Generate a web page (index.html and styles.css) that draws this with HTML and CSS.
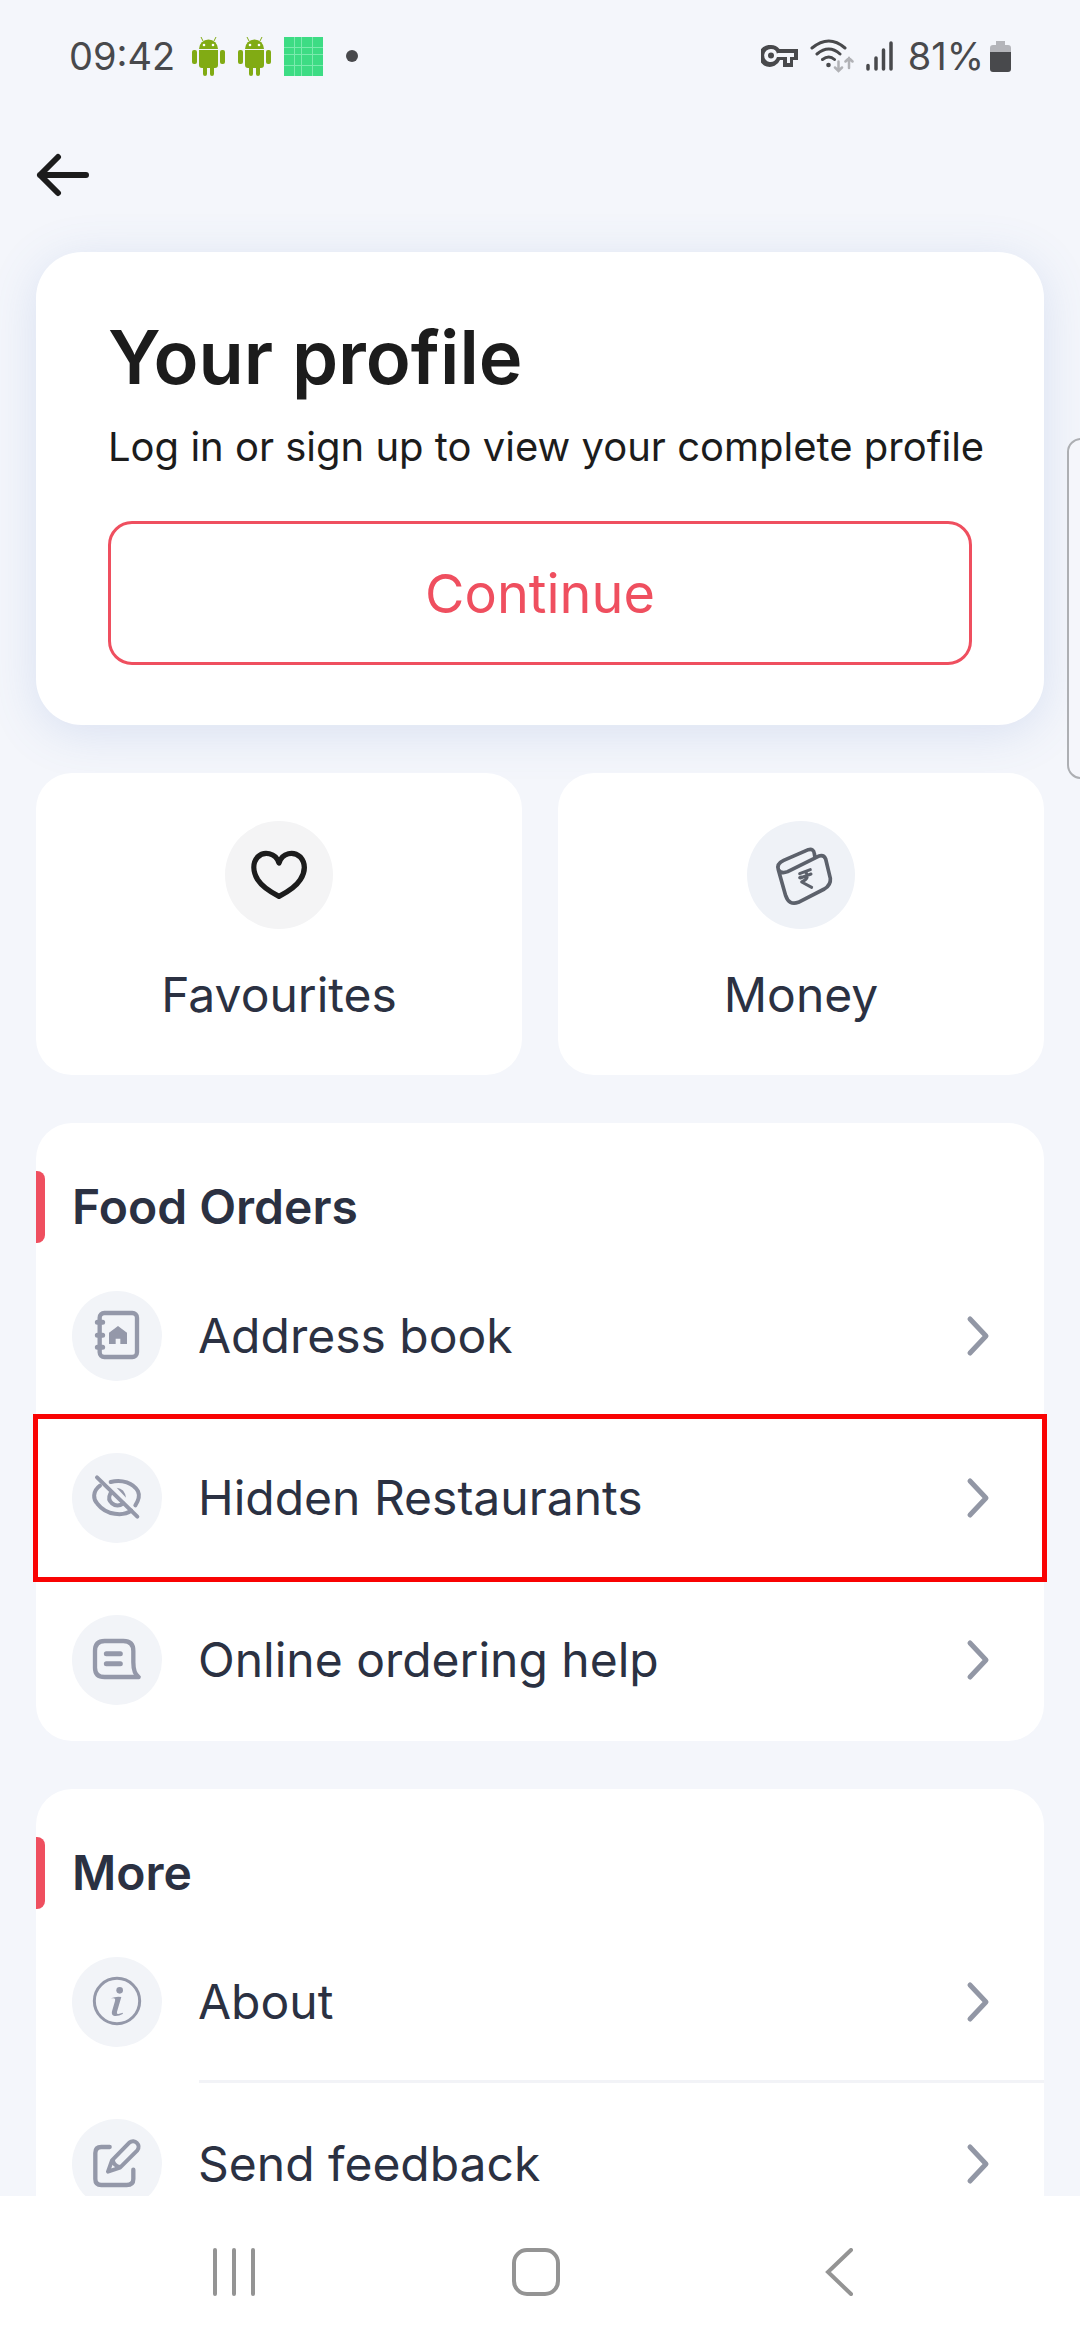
FILE: index.html
```html
<!DOCTYPE html>
<html lang="en">
<head>
<meta charset="utf-8">
<meta name="viewport" content="width=device-width, initial-scale=1">
<title>Your profile</title>
<link rel="stylesheet" href="styles.css">
</head>
<body>
<svg class="defs" aria-hidden="true">
  <symbol id="chevron" viewBox="0 0 24 42"><path d="M4 4l16 17-16 17" fill="none" stroke="currentColor" stroke-width="5" stroke-linecap="round" stroke-linejoin="round"/></symbol>
  <symbol id="android" viewBox="0 0 33 39">
    <g fill="#81ab14">
      <path d="M7 12a9.500 9.500 0 0 1 19 0z"/>
      <path d="M7 13h19v15a3 3 0 0 1-3 3h-1v6a2 2 0 0 1-4 0v-6h-3v6a2 2 0 0 1-4 0v-6h-1a3 3 0 0 1-3-3z"/>
      <rect x="0" y="13" width="5" height="14" rx="2"/><rect x="28" y="13" width="5" height="14" rx="2"/>
    </g>
    <path d="M11 4L9 0M22 4l2-4" stroke="#81ab14" stroke-width="1"/>
    <circle cx="12" cy="8" r="1.300" fill="#fff"/><circle cx="21" cy="8" r="1.300" fill="#fff"/>
  </symbol>
</svg>
<main class="screen">
  <div class="status">
    <div class="status-left">
      <span class="clock">09:42</span>
      <svg width="33" height="39"><use href="#android"/></svg>
      <svg width="33" height="39"><use href="#android"/></svg>
      <svg width="39" height="39" viewBox="0 0 39 39"><path fill="#3ddc84" d="M0 0h39v39H0z"/><path d="M10.500 0v39M17.500 0v39M28.500 0v39M0 10.500h39M0 17.500h39M0 28.500h39" stroke="#7bebae" stroke-width="1"/></svg>
      <span class="dot"></span>
    </div>
    <div class="status-right">
      <svg width="37" height="22" viewBox="0 0 37 22"><path fill="#48494c" fill-rule="evenodd" d="M10 0a11 11 0 1 0 9 15h3v7h10v-7h5V4H18.500A11 11 0 0 0 10 0zM10 4a6 6 0 0 1 6 5l.500-1H33v4h-4v6h-3v-6H16a6.500 6.500 0 1 1-6-8z"/><circle cx="10" cy="10.500" r="3" fill="#48494c"/></svg>
      <svg width="44" height="34" viewBox="0 0 44 34" fill="none" stroke-linecap="round"><path d="M2 9Q19-5 35 9M7 15Q19 5 30 15M12.500 20.500Q19 15.500 24.500 20.500" stroke="#48494c" stroke-width="3"/><circle cx="18.500" cy="26" r="2.300" fill="#48494c"/><path d="M28.500 22.500v9M25 28.500l3.500 3.500 3.500-3.500M39 29V19M35.500 22.500L39 19l3.500 3.500" stroke="#b1b2b6" stroke-width="2.500"/></svg>
      <svg width="28" height="30" viewBox="0 0 28 30"><path d="M2 24.500v3.500M10 17v11M17.500 9v19M25 2v26" stroke="#48494c" stroke-width="3.500" stroke-linecap="round"/></svg>
      <span class="charge">81%</span>
      <svg width="21" height="31" viewBox="0 0 21 31"><path fill="#b4b5ba" d="M6 0h9v4h3q3 0 3 3v5H0V7q0-3 3-3h3z"/><path fill="#48494c" d="M0 11h21v17q0 3-3 3H3q-3 0-3-3z"/></svg>
    </div>
  </div>

  <header class="topbar">
    <button class="back" type="button" aria-label="Back">
      <svg width="54" height="44" viewBox="0 0 54 44"><path d="M22 4L4 22l18 18M4 22h46" fill="none" stroke="#1c1c1c" stroke-width="6" stroke-linecap="round" stroke-linejoin="round"/></svg>
    </button>
  </header>

  <section class="card profile">
    <h1>Your profile</h1>
    <p>Log in or sign up to view your complete profile</p>
    <button class="continue" type="button">Continue</button>
  </section>

  <nav class="tiles" aria-label="Shortcuts">
    <a class="card tile" href="#favourites">
      <svg width="108" height="108" viewBox="0 0 324 324"><circle cx="162" cy="162" r="162" fill="#f4f4f5"/><path d="M162 126C152 94 116 90 98 108C82 126 84 152 98 176C112 198 138 214 162 226C186 214 212 198 226 176C242 152 242 126 226 108C206 90 172 94 162 126z" fill="none" stroke="#1c1c1c" stroke-width="16" stroke-linejoin="round"/></svg>
      <span>Favourites</span>
    </a>
    <a class="card tile" href="#money">
      <svg width="108" height="108" viewBox="0 0 324 324"><circle cx="162" cy="162" r="162" fill="#eff2f7"/><g fill="none" stroke="#5c616b" stroke-width="11" stroke-linecap="round" stroke-linejoin="round"><path d="M94 146L116 224Q126 254 154 244L232 204Q252 192 250 172L236 114Q230 100 214 106L122 152Q102 160 94 146Q88 128 110 118L184 86Q200 82 202 98L204 110"/><path stroke-width="9" d="M158 158L190 146M160 171L192 159M176 153Q190 172 164 183L194 199M158 170L163 168"/></g></svg>
      <span>Money</span>
    </a>
  </nav>

  <section class="card group">
    <h2>Food Orders</h2>
    <ul>
      <li><a class="row" href="#address">
        <svg class="badge" viewBox="0 0 270 270"><circle class="disc" cx="135" cy="135" r="135"/><rect x="83" y="66" width="112" height="132" rx="14" stroke-width="13"/><path d="M76 94h16M76 133h16M76 169h16" stroke-width="15"/><path class="solid" d="M138 105l27 20v34h-20v-16h-14v16h-20v-34z"/></svg>
        <span>Address book</span><svg class="chevron"><use href="#chevron"/></svg></a></li>
      <li><a class="row marked" href="#hidden">
        <svg class="badge" viewBox="0 0 270 270"><circle class="disc" cx="135" cy="135" r="135"/><g stroke-width="12"><path d="M84 98C60 116 64 140 76 152C104 188 154 190 178 173M116 87C150 78 184 90 198 115Q206 132 190 157"/><path d="M115 122Q106 140 120 151Q136 164 154 151"/><path class="solid" d="M134 104q24 2 28 30z"/><path d="M75 73L196 191"/></g></svg>
        <span>Hidden Restaurants</span><svg class="chevron"><use href="#chevron"/></svg></a></li>
      <li><a class="row" href="#help">
        <svg class="badge" viewBox="0 0 270 270"><circle class="disc" cx="135" cy="135" r="135"/><path d="M98 78H154Q184 78 184 108V142Q184 176 200 186H98Q69 186 69 158V108Q69 78 98 78z" stroke-width="13"/><path d="M103 116h42M103 146h42" stroke-width="15"/></svg>
        <span>Online ordering help</span><svg class="chevron"><use href="#chevron"/></svg></a></li>
    </ul>
  </section>

  <section class="card group">
    <h2>More</h2>
    <ul>
      <li><a class="row ruled" href="#about">
        <svg class="badge" viewBox="0 0 270 270"><circle class="disc" cx="135" cy="135" r="135"/><circle cx="135" cy="132" r="68" stroke-width="9"/><circle class="solid" cx="143" cy="100" r="10"/><path class="solid" d="M117 124q16-7 31-4l-13 44q-2 8 4 7l14-4-1 4q-12 7-24 6-11-2-8-14l9-31q2-8-4-8h-9z"/></svg>
        <span>About</span><svg class="chevron"><use href="#chevron"/></svg></a></li>
      <li><a class="row" href="#feedback">
        <svg class="badge" viewBox="0 0 270 270"><circle class="disc" cx="135" cy="135" r="135"/><path d="M113 84H88Q70 84 70 102V180Q70 198 88 198H164Q184 198 184 180V152" stroke-width="13"/><path d="M108 158L120 124L172 71C188 58 208 78 196 94L144 146zM122 122Q126 142 144 144" stroke-width="12"/></svg>
        <span>Send feedback</span><svg class="chevron"><use href="#chevron"/></svg></a></li>
    </ul>
  </section>
  <div class="edge-handle"></div>
</main>

<footer class="system-nav">
  <button type="button" aria-label="Recent apps"><svg width="48" height="48" viewBox="0 0 48 48"><path d="M5 2v44M24 2v44M43 2v44"/></svg></button>
  <button type="button" aria-label="Home"><svg width="48" height="48" viewBox="0 0 48 48"><rect x="2" y="2" width="44" height="44" rx="13"/></svg></button>
  <button type="button" aria-label="Back"><svg width="48" height="48" viewBox="0 0 48 48"><path d="M36 2L13 24l23 22"/></svg></button>
</footer>
</body>
</html>
```

FILE: styles.css
```css
* { box-sizing: border-box; }

body {
  margin: 0;
  height: 100vh;
  display: flex;
  flex-direction: column;
  background: #f4f6fb;
  color: #2b3142;
  font-family: Inter, "Open Sans", sans-serif;
}

svg { display: block; flex: none; }
.defs { position: absolute; width: 0; height: 0; }
a { color: inherit; text-decoration: none; }
button { font: inherit; border: 0; padding: 0; background: none; }
h1, h2, p, ul { margin: 0; padding: 0; }
ul { list-style: none; }

.screen {
  position: relative;
  flex: 1;
  min-height: 0;
  padding: 0 36px;
  overflow: hidden auto;
  scrollbar-width: none;
}

.status {
  display: flex;
  justify-content: space-between;
  align-items: center;
  height: 112px;
  padding: 0 33px;
  color: #48494c;
  font-size: 38px;
  line-height: 48px;
}
.status-left, .status-right { display: flex; align-items: center; }
.status-left { gap: 13px; }
.status-right { gap: 12px; }
.clock { margin-right: 4px; }
.charge { margin: 0 -6px 0 2px; }
.dot { width: 12px; height: 12px; margin-left: 10px; border-radius: 50%; background: #48494c; }

.topbar { display: flex; align-items: center; height: 126px; margin-bottom: 14px; }

.card { background: #fff; border-radius: 36px; }

.profile {
  padding: 60px 72px;
  border-radius: 46px;
  color: #1c1c1c;
  box-shadow: 0 8px 48px rgba(90, 125, 195, 0.17);
}
h1 { font-size: 74px; font-weight: 600; line-height: 90px; }
.profile p { margin: 15px 0 44px; font-size: 40px; line-height: 60px; white-space: nowrap; }
.continue {
  display: block;
  width: 100%;
  height: 144px;
  border: 3px solid #ef4f5f;
  border-radius: 24px;
  color: #ef4f5f;
  font-size: 54px;
}

.tiles { display: grid; grid-template-columns: 1fr 1fr; gap: 36px; margin: 48px 0; }
.tile {
  display: flex;
  flex-direction: column;
  align-items: center;
  gap: 36px;
  padding: 48px 0 50px;
  font-size: 48px;
  line-height: 60px;
}

.group { padding-top: 48px; margin-bottom: 48px; }
h2 {
  position: relative;
  margin-bottom: 12px;
  padding-left: 36px;
  font-size: 48px;
  font-weight: 600;
  line-height: 72px;
}
h2::before {
  content: "";
  position: absolute;
  inset: 0 auto 0 0;
  width: 9px;
  border-radius: 0 8px 8px 0;
  background: #ef4f5f;
}

.row {
  display: flex;
  align-items: center;
  gap: 36px;
  height: 162px;
  padding: 0 54px 0 36px;
  font-size: 48px;
  line-height: 60px;
}
.row span { flex: 1; }
.marked { outline: 5px solid #f90303; outline-offset: -2px; }
.ruled {
  background: linear-gradient(#f2f3f7, #f2f3f7) 163px 100% / 100% 3px no-repeat;
}
.badge {
  width: 90px;
  height: 90px;
  fill: none;
  stroke: #9498a9;
  stroke-linecap: round;
  stroke-linejoin: round;
}
.badge .disc { fill: #f2f4f8; stroke: none; }
.badge .solid { fill: #9498a9; stroke: none; }
.chevron { width: 24px; height: 42px; color: #9297a5; }

.edge-handle {
  position: absolute;
  top: 438px;
  right: -4px;
  width: 17px;
  height: 341px;
  border: 2px solid #adafb3;
  border-radius: 14px 0 0 14px;
  background: #f5f6fb;
}

.system-nav {
  display: flex;
  justify-content: space-around;
  align-items: center;
  height: 144px;
  padding: 8px 90px 0 83px;
  background: #fff;
}
.system-nav svg { fill: none; stroke: #949494; stroke-width: 4; stroke-linecap: round; }
```
